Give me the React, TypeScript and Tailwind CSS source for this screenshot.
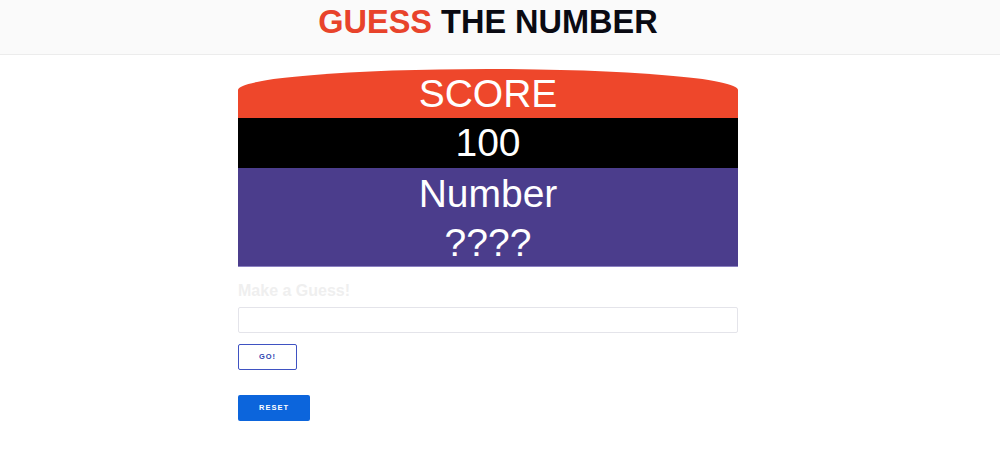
import React from "react";

export default function App() {
  return (
    <div className="min-h-[454px] w-full bg-white font-['Liberation_Sans',Arial,sans-serif]">
      {/* Header */}
      <header className="h-[55px] bg-[#fafafa] border-b border-[#ececec] flex items-start justify-center pr-[24px]">
        <h1 className="text-[32.5px] font-bold leading-none mt-[6px]">
          <span className="text-[#e8432b]">GUESS</span>{" "}
          <span className="text-[#0a0a12]">THE NUMBER</span>
        </h1>
      </header>

      <div className="pr-[24px]">
        <main className="w-[500px] mx-auto pt-[14px]">
          {/* Scoreboard */}
          <div className="text-white text-center text-[39px] leading-[50px]">
            <div className="bg-[#ee472b] h-[49px] rounded-tl-[250px_21px] rounded-tr-[250px_21px] leading-[49px]">
              SCORE
            </div>
            <div className="bg-black h-[50px]">100</div>
            <div className="bg-[#4b3d8c] h-[99px] leading-[49px] pt-[1px] border-b border-[#8a80c0]">
              <div>Number</div>
              <div>????</div>
            </div>
          </div>

          {/* Guess form */}
          <div className="mt-[15px]">
            <label className="block text-[16px] font-bold text-[#efefef] leading-[18px]">
              Make a Guess!
            </label>
            <input
              type="text"
              className="mt-[7px] block w-full h-[26px] border border-[#e4e4ea] rounded-[2px] bg-white outline-none"
            />
            <button className="mt-[11px] block w-[59px] h-[26px] border border-[#3f52c2] rounded-[2px] bg-white text-[#2f44b0] text-[7.5px] font-bold tracking-[1px]">
              GO!
            </button>
            <button className="mt-[25px] block w-[72px] h-[26px] rounded-[2px] bg-[#0c65dc] text-white text-[7.5px] font-bold tracking-[1px]">
              RESET
            </button>
          </div>
        </main>
      </div>
    </div>
  );
}
